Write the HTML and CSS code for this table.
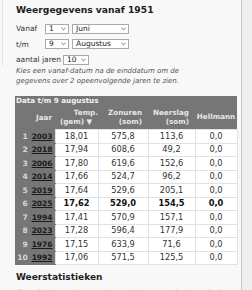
FILE: index.html
```html
<!DOCTYPE html>
<html lang="nl">
<head>
<meta charset="utf-8">
<link rel="stylesheet" href="styles.css">
</head>
<body>
<div class="panel">
  <div class="head">
    <h2 class="title">Weergegevens vanaf 1951</h2>
    <div class="form">
      <div class="frow">
        <span class="lbl">Vanaf</span>
        <div class="sel day"><span>1</span><svg class="chev" viewBox="0 0 6 4"><path d="M0.5 0.5 L3 3 L5.5 0.5" /></svg></div>
        <div class="sel month"><span>Juni</span><svg class="chev" viewBox="0 0 6 4"><path d="M0.5 0.5 L3 3 L5.5 0.5" /></svg></div>
      </div>
      <div class="frow">
        <span class="lbl">t/m</span>
        <div class="sel day"><span>9</span><svg class="chev" viewBox="0 0 6 4"><path d="M0.5 0.5 L3 3 L5.5 0.5" /></svg></div>
        <div class="sel month"><span>Augustus</span><svg class="chev" viewBox="0 0 6 4"><path d="M0.5 0.5 L3 3 L5.5 0.5" /></svg></div>
      </div>
      <div class="frow">
        <span class="lbl-free">aantal jaren</span>
        <div class="sel yrs"><span>10</span><svg class="chev" viewBox="0 0 6 4"><path d="M0.5 0.5 L3 3 L5.5 0.5" /></svg></div>
      </div>
    </div>
  </div>
  <p class="note">Kies een vanaf-datum na de einddatum om de<br>gegevens over 2 opeenvolgende jaren te zien.</p>
  <table class="data">
    <colgroup>
      <col class="c1"><col class="c2"><col class="c3"><col class="c4"><col class="c5">
    </colgroup>
    <thead>
      <tr><th colspan="5" class="cap">Data t/m 9 augustus</th></tr>
      <tr class="hdr">
        <th class="jaar">Jaar</th>
        <th><span class="l1 shift">Temp.</span><span class="l2">(gem) ▼</span></th>
        <th><span class="l1">Zonuren</span><span class="l2">(som)</span></th>
        <th><span class="l1">Neerslag</span><span class="l2">(som)</span></th>
        <th class="hm">Hellmann</th>
      </tr>
    </thead>
    <tbody>
      <tr><td class="yr"><span class="rank">1</span><a>2003</a></td><td>18,01</td><td>575,8</td><td>113,6</td><td>0,0</td></tr>
      <tr><td class="yr"><span class="rank">2</span><a>2018</a></td><td>17,94</td><td>608,6</td><td>49,2</td><td>0,0</td></tr>
      <tr><td class="yr"><span class="rank">3</span><a>2006</a></td><td>17,80</td><td>619,6</td><td>152,6</td><td>0,0</td></tr>
      <tr><td class="yr"><span class="rank">4</span><a>2014</a></td><td>17,66</td><td>524,7</td><td>96,2</td><td>0,0</td></tr>
      <tr><td class="yr"><span class="rank">5</span><a>2019</a></td><td>17,64</td><td>529,6</td><td>205,1</td><td>0,0</td></tr>
      <tr class="cur"><td class="yr"><span class="rank">6</span><a>2025</a></td><td>17,62</td><td>529,0</td><td>154,5</td><td>0,0</td></tr>
      <tr><td class="yr"><span class="rank">7</span><a>1994</a></td><td>17,41</td><td>570,9</td><td>157,1</td><td>0,0</td></tr>
      <tr><td class="yr"><span class="rank">8</span><a>2023</a></td><td>17,28</td><td>596,4</td><td>177,9</td><td>0,0</td></tr>
      <tr><td class="yr"><span class="rank">9</span><a>1976</a></td><td>17,15</td><td>633,9</td><td>71,6</td><td>0,0</td></tr>
      <tr><td class="yr"><span class="rank">10</span><a>1992</a></td><td>17,06</td><td>571,5</td><td>125,5</td><td>0,0</td></tr>
    </tbody>
  </table>
  <h2 class="title2">Weerstatistieken</h2>
  <p class="faint">Overzicht van de warmste, natste en zonnigste perioden</p>
</div>
</body>
</html>
```
FILE: styles.css
```css
html, body {
  margin: 0;
  padding: 0;
}
body {
  background: #eeeeee;
  font-family: "DejaVu Sans", Verdana, sans-serif;
  color: #333;
  width: 252px;
  height: 290px;
  overflow: hidden;
}
.panel {
  width: 241px;
  height: 290px;
  background: #f8f8f8;
  border-right: 1px solid #c6c6c6;
  box-sizing: content-box;
  overflow: hidden;
}
.head {
  margin-left: 2px;
  border-left: 1px solid #e4e4e4;
  padding-left: 13px;
  padding-top: 4px;
  padding-bottom: 1px;
}
.title {
  margin: 0;
  font-size: 9.2px;
  line-height: 12px;
  font-weight: bold;
  color: #1e1e1e;
}
.form {
  display: flex;
  flex-direction: column;
  gap: 4.5px;
  margin-top: 7px;
}
.frow {
  display: flex;
  align-items: center;
  height: 11px;
  gap: 3px;
  font-size: 7.5px;
  color: #333;
}
.lbl {
  width: 26px;
}
.lbl-free {
  margin-right: -1px;
}
.sel {
  height: 10px;
  box-sizing: border-box;
  border: 1px solid #a9a9a9;
  background: #fff;
  display: flex;
  align-items: center;
  justify-content: space-between;
  padding: 0 2px 0 3px;
  font-size: 7.5px;
  line-height: 8px;
  color: #222;
}
.day { width: 24px; }
.month { width: 57px; }
.yrs { width: 26px; }
.chev {
  width: 5px;
  height: 4px;
  fill: none;
  stroke: #444;
  stroke-width: 0.9;
}
.note {
  margin: 1px 0 0 16px;
  font-size: 7px;
  line-height: 9.5px;
  font-style: italic;
  color: #555;
}
.data {
  margin: 10px 0 0 15px;
  width: 222px;
  border-collapse: collapse;
  table-layout: fixed;
  font-size: 8.25px;
}
.c1 { width: 40px; }
.c2 { width: 43px; }
.c3 { width: 50px; }
.c4 { width: 47px; }
.c5 { width: 42px; }
.data th {
  background: #767676;
  color: #e6e6e6;
  font-weight: bold;
  font-size: 7.2px;
  padding: 0;
}
.cap {
  text-align: left;
  height: 10px;
  line-height: 10px;
  padding-left: 1px !important;
  color: #f2f2f2 !important;
}
.hdr th {
  height: 23px;
  text-align: right;
  padding-right: 3px;
  line-height: 8.5px;
  vertical-align: middle;
}
.hdr th .l1, .hdr th .l2 {
  display: block;
  padding-right: 3px;
}
.hdr th .shift {
  padding-right: 0;
  margin-right: -3px;
}
.hdr th.jaar {
  padding-right: 3px;
}
.hdr th.hm {
  text-align: center;
  padding-right: 0;
}
.data td {
  background: #fff;
  border: 1px solid #e2e2e2;
  text-align: center;
  height: 12.5px;
  padding: 0;
  line-height: 11px;
  color: #333;
}
.data td.yr {
  background: #767676;
  border: none;
  border-bottom: 1px solid #767676;
  text-align: right;
  padding-right: 2px;
  font-size: 7.5px;
  font-weight: bold;
}
.rank {
  color: #d8d8d8;
  margin-right: 4px;
}
.yr a {
  color: #1a1a1a;
  text-decoration: underline;
}
.cur td {
  font-weight: bold;
  color: #111;
}
.title2 {
  margin: 6px 0 0 16px;
  font-size: 9px;
  line-height: 12px;
  font-weight: bold;
  color: #1e1e1e;
}
.faint {
  margin: 5px 0 0 16px;
  font-size: 7.5px;
  line-height: 10px;
  color: #b0b0b0;
}
```
